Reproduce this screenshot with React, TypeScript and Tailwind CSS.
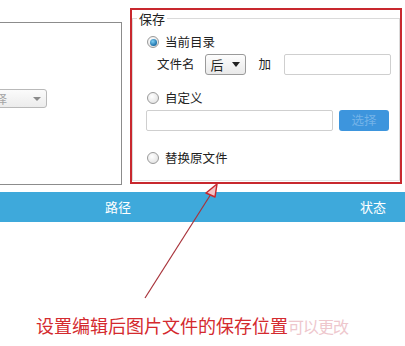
import React from "react";

const font = { fontFamily: '"Noto Sans CJK SC", "Noto Sans", sans-serif' };

function Radio({ checked }: { checked?: boolean }) {
  return (
    <div className="w-[12px] h-[12px] rounded-full border border-[#9a9a9a] bg-[radial-gradient(circle_at_40%_35%,#ffffff,#dcdcdc)] flex items-center justify-center shrink-0">
      {checked && (
        <div className="w-[7px] h-[7px] rounded-full bg-[radial-gradient(circle_at_40%_35%,#7fd0f5,#1a6fa8_70%,#0e4f7e)]" />
      )}
    </div>
  );
}

export default function App() {
  return (
    <div
      className="relative w-[405px] h-[346px] bg-white overflow-hidden text-[#222]"
      style={font}
    >
      <div className="flex h-[192px]">
        {/* left panel */}
        <div className="mt-[22px] ml-[-2px] w-[124px] h-[163px] border border-[#8c8c8c] bg-white shrink-0">
          <div className="mt-[66px] ml-[-60px] w-[108px] h-[19px] rounded-[3px] border border-[#b9b9b9] bg-[linear-gradient(#fbfbfb,#ececec)] flex items-center justify-end pr-[5px]">
            <span className="text-[12px] text-[#a5a5a5] mr-[26px] leading-none">请选择</span>
            <span className="w-0 h-0 border-l-[4px] border-r-[4px] border-t-[4px] border-l-transparent border-r-transparent border-t-[#8a8a8a]" />
          </div>
        </div>
        {/* red highlighted panel */}
        <div className="ml-[8px] mt-[8px] w-[272px] h-[176px] border-2 border-[#c8282e] shrink-0 bg-white">
          <fieldset className="h-[171px] border border-[#dadada] border-b-[#e6e6e6] pl-[14px]">
            <legend className="ml-[-10px] px-[2px] text-[13px] leading-[17px] text-[#222]">保存</legend>
            <div className="flex items-center gap-[6px] h-[16px] mt-[7px] text-[12.5px]">
              <Radio checked />
              <span>当前目录</span>
            </div>
            <div className="flex items-center h-[21px] mt-[4px] text-[12.5px]">
              <span className="ml-[10px]">文件名</span>
              <div className="ml-[10px] w-[41px] h-[21px] rounded-[3px] border border-[#9a9a9a] bg-[linear-gradient(#fdfdfd,#e9e9e9)] flex items-center justify-between px-[5px]">
                <span className="text-[13px]">后</span>
                <span className="w-0 h-0 border-l-[4px] border-r-[4px] border-t-[5px] border-l-transparent border-r-transparent border-t-[#222]" />
              </div>
              <span className="ml-[13px]">加</span>
              <div className="ml-[13px] w-[107px] h-[21px] rounded-[2px] border border-[#cfcfcf] bg-white" />
            </div>
            <div className="flex items-center gap-[6px] h-[16px] mt-[15px] text-[12.5px]">
              <Radio />
              <span>自定义</span>
            </div>
            <div className="flex items-center mt-[4px] ml-[-1px]">
              <div className="w-[187px] h-[21px] rounded-[2px] border border-[#cfcfcf] bg-white" />
              <div className="ml-[6px] w-[50px] h-[21px] rounded-[3px] bg-[#3d95dd] flex items-center justify-center text-[12.5px] text-[#74b3e8]">
                选择
              </div>
            </div>
            <div className="flex items-center gap-[6px] h-[16px] mt-[19px] text-[12.5px]">
              <Radio />
              <span>替换原文件</span>
            </div>
          </fieldset>
        </div>
      </div>
      {/* blue header bar */}
      <div className="h-[30px] bg-[#3ea9db] flex items-center text-white text-[13px]">
        <span className="ml-[105px]">路径</span>
        <span className="ml-auto mr-[19px]">状态</span>
      </div>
      {/* caption */}
      <div className="mt-[92px] ml-[36px] text-[18px] leading-[22px] whitespace-nowrap text-[#d42a2e]">
        设置编辑后图片文件的保存位置
        <span className="text-[#e4a3ad] opacity-60 text-[16px] tracking-[-1px]">可以更改</span>
      </div>
      {/* arrow overlay */}
      <svg className="absolute left-0 top-0" width="405" height="346" viewBox="0 0 405 346">
        <line x1="145" y1="298" x2="211" y2="194" stroke="#a8323a" strokeWidth="1.2" />
        <polygon points="217,184 206,193 215,197" fill="#f3c3c6" stroke="#c8282e" strokeWidth="1.5" strokeLinejoin="round" />
      </svg>
    </div>
  );
}
